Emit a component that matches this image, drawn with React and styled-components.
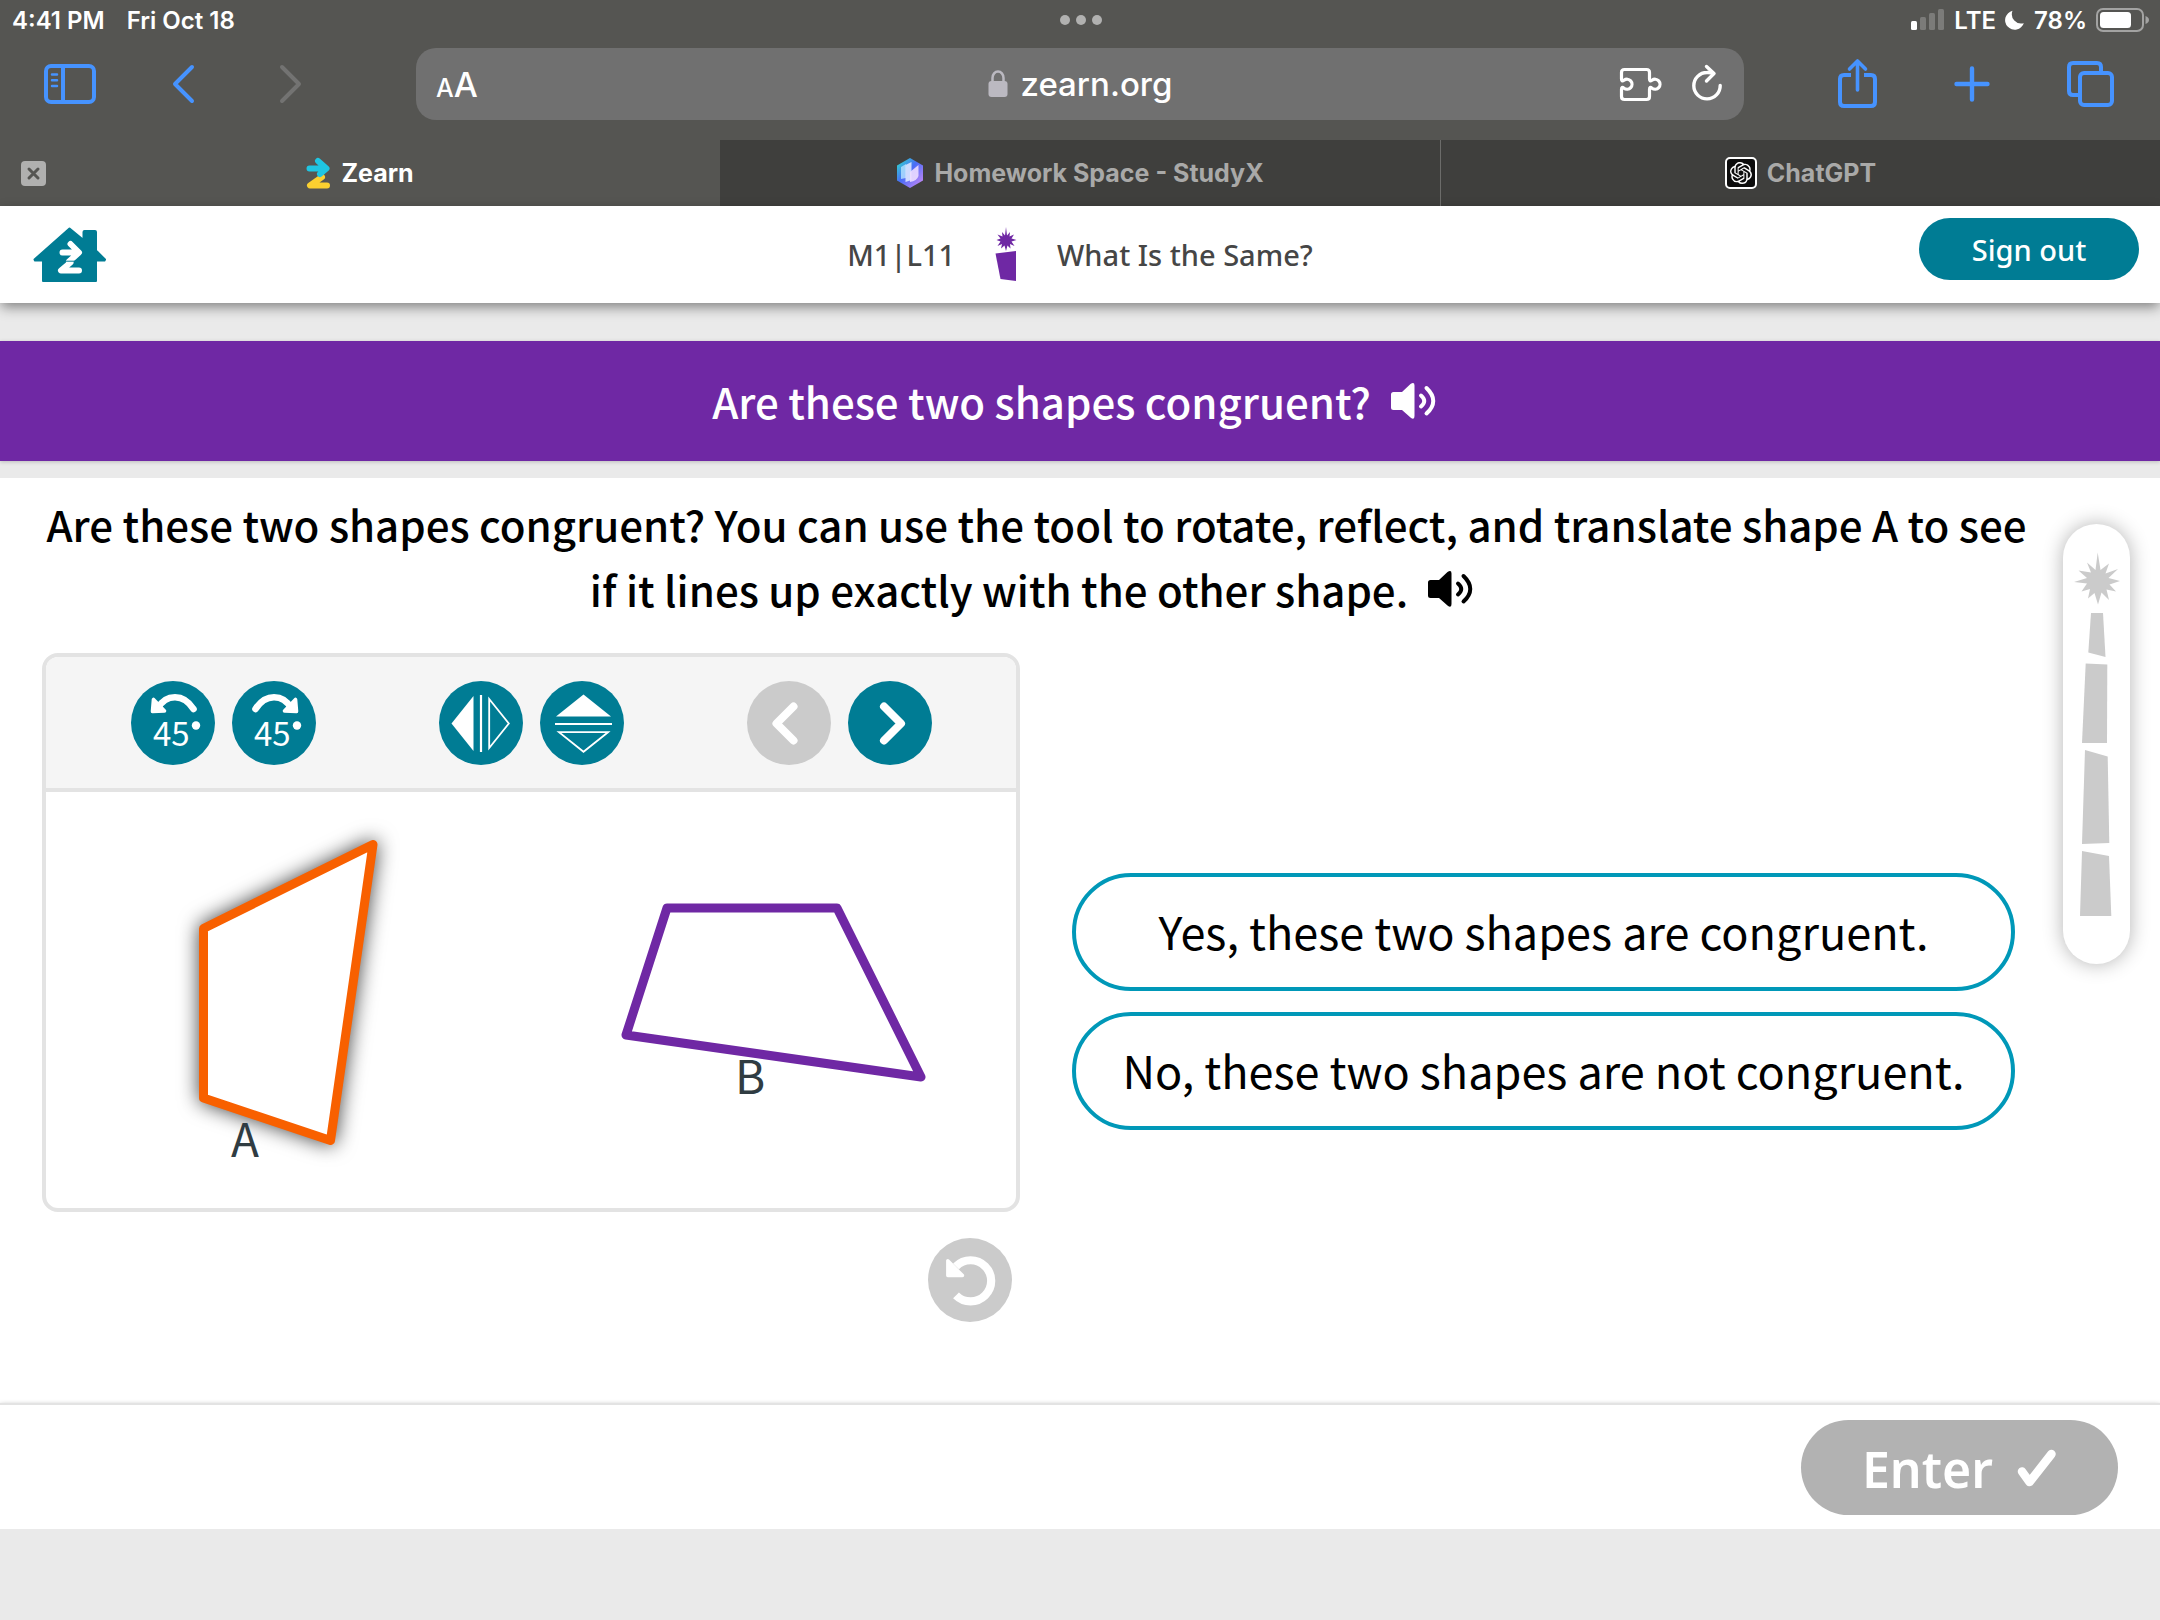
import React from 'react';
import styled, { createGlobalStyle } from 'styled-components';
import { SiOpenai } from 'react-icons/si';

const LESSON_FONT = "'Noto Sans CJK SC', 'Noto Sans', sans-serif";
const HEADER_FONT = "'Noto Sans', 'Open Sans', sans-serif";
const SYSTEM_FONT = "Inter, 'Liberation Sans', sans-serif";

const TEAL = '#007c94';
const PURPLE = '#6f28a4';

const GlobalStyle = createGlobalStyle`
  * {
    box-sizing: border-box;
  }

  body {
    margin: 0;
    background: #eaeaea;
  }

  svg {
    display: block;
    flex: none;
  }

  button {
    border: 0;
    padding: 0;
    background: none;
    color: inherit;
    font: inherit;
  }
`;

const SidebarIcon = () => (
  <svg width="52" height="40" viewBox="0 0 52 40" fill="none" stroke="currentColor" strokeWidth="4" strokeLinecap="round">
    <rect x="2" y="2" width="48" height="36" rx="5" />
    <path d="M19 3V37" />
    <path d="M8 10.5H13M8 16.3H13M8 22H13" strokeWidth="2.5" />
  </svg>
);

const BackIcon = () => (
  <svg width="24" height="40" viewBox="0 0 24 40" fill="none" stroke="currentColor" strokeWidth="4" strokeLinecap="round" strokeLinejoin="round">
    <path d="M20 3L3 20L20 37" />
  </svg>
);

const ForwardIcon = () => (
  <svg width="24" height="40" viewBox="0 0 24 40" fill="none" stroke="currentColor" strokeWidth="4" strokeLinecap="round" strokeLinejoin="round">
    <path d="M3 3L20 20L3 37" />
  </svg>
);

const LockIcon = () => (
  <svg width="20" height="28" viewBox="0 0 20 28" fill="#bbb9c1">
    <rect x="0.5" y="11" width="19" height="16" rx="3" />
    <path d="M4.5 12V8a5.5 6.5 0 0 1 11 0V12" fill="none" stroke="#bbb9c1" strokeWidth="2.5" />
  </svg>
);

const PuzzleIcon = () => (
  <svg width="44" height="37" viewBox="0 0 44 37" fill="none" stroke="currentColor" strokeWidth="3.2" strokeLinejoin="round">
    <path d="M6.5 3.5H28.5Q31.5 3.5 31.5 6.5V13Q31.5 16 34 14.2A5 5 0 1 1 34 22.2Q31.5 20.2 31.5 23.5V30.5Q31.5 33.5 28.5 33.5H6.5Q3.5 33.5 3.5 30.5V23.5Q3.5 20.2 6 22.2A5 5 0 1 0 6 14.2Q3.5 16 3.5 13V6.5Q3.5 3.5 6.5 3.5Z" />
  </svg>
);

const ReloadIcon = () => (
  <svg width="34" height="40" viewBox="0 0 34 40" fill="none" stroke="currentColor" strokeWidth="3.4" strokeLinecap="round" strokeLinejoin="round">
    <path d="M30.2 21.5A13.2 13.2 0 1 1 17 8.5Q20.5 8.3 23.5 9.5" />
    <path d="M16.5 2.5L24 9.5L16.5 17" />
  </svg>
);

const ShareIcon = () => (
  <svg width="40" height="52" viewBox="0 0 40 52" fill="none" stroke="currentColor" strokeWidth="4" strokeLinecap="round" strokeLinejoin="round">
    <path d="M14 17H7Q3 17 3 21V44Q3 48 7 48H34Q38 48 38 44V21Q38 17 34 17H27" strokeLinecap="butt" />
    <path d="M20.5 3V32M12.5 11L20.5 3L28.5 11" strokeWidth="3.6" />
  </svg>
);

const PlusIcon = () => (
  <svg width="36" height="36" viewBox="0 0 36 36" stroke="currentColor" strokeWidth="4.4" strokeLinecap="round">
    <path d="M18 2.5V33.5M2.5 18H33.5" />
  </svg>
);

const TabsIcon = () => (
  <svg width="48" height="48" viewBox="0 0 48 48" fill="none" stroke="currentColor" strokeWidth="4">
    <rect x="13" y="13" width="32" height="32" rx="4" />
    <path d="M34 11V7Q34 3 30 3H6Q2 3 2 7V31Q2 35 6 35H11" />
  </svg>
);

const SignalIcon = () => (
  <svg width="34" height="22" viewBox="0 0 34 22" fill="#7b7b79">
    <rect x="0" y="12" width="6" height="9" rx="1.5" fill="#fff" />
    <rect x="9" y="8" width="6" height="13" rx="1.5" />
    <rect x="18" y="4" width="6" height="17" rx="1.5" />
    <rect x="27" y="0" width="6" height="21" rx="1.5" />
  </svg>
);

const MoonIcon = () => (
  <svg width="20" height="20" viewBox="0 0 20 20" fill="#fff">
    <path d="M7.5 0.8A9.6 9.6 0 1 0 18.8 13.2A9.4 9.4 0 0 1 7.5 0.8Z" />
  </svg>
);

const BatteryIcon = () => (
  <svg width="54" height="24" viewBox="0 0 54 24">
    <rect x="1" y="1" width="46" height="22" rx="6" fill="none" stroke="#a3a3a2" strokeWidth="2" />
    <rect x="4" y="4" width="31" height="16" rx="3.5" fill="#fff" />
    <path d="M49.5 8Q53 9.5 53 12T49.5 16Z" fill="#a3a3a2" />
  </svg>
);

const CloseIcon = () => (
  <svg width="25" height="25" viewBox="0 0 25 25">
    <rect width="25" height="25" rx="4" fill="#b0b0af" />
    <path d="M8 8L17 17M17 8L8 17" stroke="#555552" strokeWidth="3" strokeLinecap="round" />
  </svg>
);

const ZearnIcon = () => (
  <svg width="25" height="32" viewBox="0 0 25 32" fill="none" strokeWidth="6" strokeLinecap="round" strokeLinejoin="round">
    <path d="M16 20L4 28.5H21" stroke="#fbd030" />
    <path d="M12 4L20.5 11.5L14 17M3.5 11.5H18" stroke="#1fc6e3" />
  </svg>
);

const StudyIcon = () => (
  <svg width="28" height="30" viewBox="0 0 28 30">
    <defs>
      <linearGradient id="hex" x1="0" y1="0" x2="1" y2="1">
        <stop offset="0" stopColor="#2be8c8" />
        <stop offset="0.45" stopColor="#4a6cf7" />
        <stop offset="1" stopColor="#d78cf5" />
      </linearGradient>
    </defs>
    <path d="M14 0L27 7.5V22.5L14 30L1 22.5V7.5Z" fill="url(#hex)" />
    <path d="M5 9L10 6V20L5 21Z" fill="#b7e4ff" opacity="0.8" />
    <path d="M9.5 7L15.5 4V22L9.5 24Z" fill="#dbe6ff" opacity="0.9" />
    <path d="M14 14L22.5 7V18Q21 23 14 24Z" fill="#ecdcff" opacity="0.9" />
  </svg>
);

const HomeIcon = () => (
  <svg width="74" height="56" viewBox="0 0 74 56" strokeLinejoin="round" strokeLinecap="round">
    <path
      d="M36.5 1.5L50.5 13V5Q50.5 4 51.5 4H62Q63 4 63 5V23.5L72 32.5L71.5 33.5H63V54H10V33.5H2L1.5 32.5Z"
      fill={TEAL}
      stroke={TEAL}
      strokeWidth="2"
    />
    <path d="M37.5 35.5L28 43.5H46" fill="none" stroke="#fff" strokeWidth="6" />
    <path d="M37.5 17L46 25.5L36 34.5M29.5 25.5H44" fill="none" stroke="#fff" strokeWidth="6" />
    <path d="M30 34.2H44" stroke={TEAL} strokeWidth="1" />
  </svg>
);

const LessonIcon = () => (
  <svg width="22" height="56" viewBox="0 0 22 56" fill={PURPLE}>
    <path d="M11 0L12 8.5L15 5L14.5 9.5L19 7.5L16.5 11.5L21.5 13L16.5 14.5L19.5 19L15 17L15.5 21.5L12.5 18.5L11 24L9.5 18.5L6 21.5L7 17L2.5 19L5.5 14.5L1.5 13L5.5 11.5L2.5 7.5L7.5 9.5L7 5L10 8.5Z" />
    <path d="M0.5 26.5L21 24V54L5.5 52Z" />
  </svg>
);

const SpeakerIcon = () => (
  <svg width="45" height="36" viewBox="0 0 45 36" fill="currentColor">
    <path d="M2.5 9H11L19.5 1Q23.5 -1.5 23.5 2.5V33Q23.5 37.5 19.5 34.5L11 27H2.5Q0 27 0 24.5V11.5Q0 9 2.5 9Z" />
    <path d="M30 12.5Q36.5 18 30 23.5M35.5 5Q49 18 35.5 30.5" fill="none" stroke="currentColor" strokeWidth="4" strokeLinecap="round" />
  </svg>
);

const RotateIcon = ({ clockwise }) => (
  <svg width="84" height="84" viewBox="0 0 84 84" fill="#fff">
    <g transform={clockwise ? 'translate(86 0) scale(-1 1)' : undefined}>
      <path d="M62.5 28Q55 16.2 44 16.2T27 27" fill="none" stroke="#fff" strokeWidth="6.6" strokeLinecap="round" />
      <path d="M22.5 18.5L21.5 30.5L33.5 30Z" stroke="#fff" strokeWidth="3.6" strokeLinejoin="round" />
    </g>
    <text x="22" y="65" fontFamily={LESSON_FONT} fontSize="33">45</text>
    <circle cx="65" cy="44.5" r="4.2" />
  </svg>
);

const ReflectIcon = ({ vertical }) => (
  <svg width="84" height="84" viewBox="0 0 84 84" fill="none" stroke="#fff" strokeWidth="1.8">
    <g transform={vertical ? 'rotate(90 42.5 42.5) translate(1 -1)' : undefined}>
      <path d="M12.5 42.5L34.5 15V70Z" fill="#fff" stroke="none" />
      <path d="M42 14V71" strokeWidth="2.2" />
      <path d="M50.2 18L69.8 42.5L50.2 67Z" />
    </g>
  </svg>
);

const ChevronIcon = ({ forward }) => (
  <svg width="84" height="84" viewBox="0 0 84 84" fill="none" stroke="#fff" strokeWidth="8" strokeLinecap="round" strokeLinejoin="round">
    <path d={forward ? 'M36 25.5L53 42.5L36 59.5' : 'M46.5 25.5L29.5 42.5L46.5 59.5'} />
  </svg>
);

const ResetIcon = () => (
  <svg width="84" height="84" viewBox="0 0 84 84" fill="none" stroke="#fff">
    <path d="M28 28.3A20.6 20.6 0 1 1 28 57.4" strokeWidth="8.2" />
    <path d="M19.8 22.8V37.5H34.5Z" fill="#fff" strokeWidth="3.4" strokeLinejoin="round" />
  </svg>
);

const CheckIcon = () => (
  <svg width="40" height="40" viewBox="0 0 40 40" fill="none" stroke="currentColor" strokeWidth="8.5" strokeLinecap="round" strokeLinejoin="round">
    <path d="M5 22.5L12.5 33L34.5 5" />
  </svg>
);

const TowerIcon = () => (
  <svg width="67" height="440" viewBox="0 0 67 440" fill="#cbcbcb">
    <path d="M34.7 28.5L37.5 46L46 39.5L42.5 49.5L55 45L45.5 54L57 57L46.5 60.5L53 67.5L43.5 65.5L46 76L38.5 68.5L35 80.5L31.5 69L25 74.5L27 65L18.5 67.5L24 59.5L11 58L24 54L15.5 46.5L28 48.5L24 38.5L32.5 46Z" />
    <path d="M28 89H40L42.5 133L25.3 128.5Z" />
    <path d="M22.7 139.5L44.3 140.5L44 219H19Z" />
    <path d="M22 226L44.7 232.5L46.3 319L19 320Z" />
    <path d="M19 327L46 332L48.3 392H17Z" />
  </svg>
);

const Tool = ({ label, disabled, children }) => (
  <RoundButton type="button" aria-label={label} disabled={disabled}>
    {children}
  </RoundButton>
);

const Workspace = () => (
  <Canvas viewBox="0 0 970 416" role="img" aria-label="Shape A and shape B">
    <ShapeA points="157.5,136.5 327,52.5 284.5,348.5 157.5,306" />
    <ShapeB points="621,116 791,116 875,285 580,243" />
    <ShapeLabel x="185" y="365">A</ShapeLabel>
    <ShapeLabel x="689" y="302">B</ShapeLabel>
  </Canvas>
);

const App = () => (
  <>
    <GlobalStyle />
    <Browser>
      <StatusBar>
        <StatusGroup>
          <span>4:41 PM</span>
          <span>Fri Oct 18</span>
        </StatusGroup>
        <Dots>
          <i />
          <i />
          <i />
        </Dots>
        <StatusGroup right>
          <SignalIcon />
          <span>LTE</span>
          <MoonIcon />
          <span>78%</span>
          <BatteryIcon />
        </StatusGroup>
      </StatusBar>
      <Toolbar>
        <NavGroup>
          <ToolbarButton aria-label="Sidebar"><SidebarIcon /></ToolbarButton>
          <ToolbarButton aria-label="Back"><BackIcon /></ToolbarButton>
          <ToolbarButton aria-label="Forward" disabled><ForwardIcon /></ToolbarButton>
        </NavGroup>
        <AddressBar>
          <TextSize type="button" aria-label="Page settings"><small>A</small>A</TextSize>
          <Address>
            <LockIcon />
            <AddressInput aria-label="Address" defaultValue="zearn.org" />
          </Address>
          <AddressActions>
            <button type="button" aria-label="Extensions"><PuzzleIcon /></button>
            <button type="button" aria-label="Reload"><ReloadIcon /></button>
          </AddressActions>
        </AddressBar>
        <ActionGroup>
          <ToolbarButton aria-label="Share"><ShareIcon /></ToolbarButton>
          <ToolbarButton aria-label="New tab"><PlusIcon /></ToolbarButton>
          <ToolbarButton aria-label="Tabs"><TabsIcon /></ToolbarButton>
        </ActionGroup>
      </Toolbar>
      <TabBar>
        <Tab active>
          <CloseButton type="button" aria-label="Close tab"><CloseIcon /></CloseButton>
          <TabTitle type="button"><ZearnIcon />Zearn</TabTitle>
        </Tab>
        <Tab>
          <TabTitle type="button"><StudyIcon />Homework Space - StudyX</TabTitle>
        </Tab>
        <Tab>
          <TabTitle type="button">
            <ChatBadge><SiOpenai size={22} /></ChatBadge>
            ChatGPT
          </TabTitle>
        </Tab>
      </TabBar>
    </Browser>
    <Header>
      <HomeLink href="#" aria-label="Home"><HomeIcon /></HomeLink>
      <Lesson>
        <span>M1|L11</span>
        <LessonIcon />
        <span>What Is the Same?</span>
      </Lesson>
      <SignOut type="button">Sign out</SignOut>
    </Header>
    <Banner>
      <h1>Are these two shapes congruent?</h1>
      <BannerSpeaker type="button" aria-label="Read title aloud"><SpeakerIcon /></BannerSpeaker>
    </Banner>
    <Main>
      <Content>
        <Prompt>
          Are these two shapes congruent? You can use the tool to rotate, reflect, and translate
          shape A to see if it lines up exactly with the other shape.
          <InlineSpeaker type="button" aria-label="Read question aloud"><SpeakerIcon /></InlineSpeaker>
        </Prompt>
        <Work>
          <div>
            <Panel>
              <PanelTools>
                <ToolPair>
                  <Tool label="Rotate 45 degrees left"><RotateIcon /></Tool>
                  <Tool label="Rotate 45 degrees right"><RotateIcon clockwise /></Tool>
                </ToolPair>
                <ToolPair>
                  <Tool label="Reflect left to right"><ReflectIcon /></Tool>
                  <Tool label="Reflect top to bottom"><ReflectIcon vertical /></Tool>
                </ToolPair>
                <ToolPair>
                  <Tool label="Undo" disabled><ChevronIcon /></Tool>
                  <Tool label="Redo"><ChevronIcon forward /></Tool>
                </ToolPair>
              </PanelTools>
              <Workspace />
            </Panel>
            <ResetRow>
              <Tool label="Reset" disabled><ResetIcon /></Tool>
            </ResetRow>
          </div>
          <Answers>
            <Answer type="button">Yes, these two shapes are congruent.</Answer>
            <Answer type="button">No, these two shapes are not congruent.</Answer>
          </Answers>
        </Work>
      </Content>
      <Progress><TowerIcon /></Progress>
    </Main>
    <Footer>
      <Enter type="button">Enter<CheckIcon /></Enter>
    </Footer>
  </>
);

const Browser = styled.div`
  background: #555552;
  color: #fff;
  font-family: ${SYSTEM_FONT};
`;

const StatusBar = styled.div`
  display: grid;
  grid-template-columns: 1fr auto 1fr;
  align-items: center;
  height: 40px;
  padding: 0 10px 0 12px;
  font-size: 24px;
  font-weight: 600;
`;

const StatusGroup = styled.div`
  display: flex;
  align-items: center;
  justify-content: ${({ right }) => (right ? 'flex-end' : 'flex-start')};
  gap: ${({ right }) => (right ? 9 : 22)}px;
`;

const Dots = styled.div`
  display: flex;
  gap: 6px;

  i {
    width: 10px;
    height: 10px;
    border-radius: 50%;
    background: #b1b1b0;
  }
`;

const Toolbar = styled.div`
  display: flex;
  align-items: center;
  height: 100px;
  padding: 8px 45px 20px 44px;
`;

const NavGroup = styled.div`
  display: flex;
  align-items: center;
  gap: 76px;
  margin-right: 106px;
`;

const ActionGroup = styled.div`
  display: flex;
  align-items: center;
  gap: 77px;
  margin-left: 93px;
`;

const ToolbarButton = styled.button.attrs({ type: 'button' })`
  display: flex;
  min-width: 31px;
  color: ${({ disabled }) => (disabled ? '#737372' : '#4693ff')};
`;

const AddressBar = styled.div`
  display: grid;
  flex: 1;
  grid-template-columns: 1fr auto 1fr;
  align-items: center;
  height: 72px;
  padding: 0 20px;
  border-radius: 20px;
  background: #707070;
`;

const TextSize = styled.button`
  justify-self: start;
  font-size: 34px;
  font-weight: 500;

  small {
    font-size: 25px;
  }
`;

const Address = styled.label`
  display: flex;
  align-items: center;
  gap: 13px;
`;

const AddressInput = styled.input`
  width: 152px;
  padding: 0;
  border: 0;
  background: none;
  color: #fff;
  font: 500 33px ${SYSTEM_FONT};
`;

const AddressActions = styled.div`
  display: flex;
  align-items: center;
  justify-content: flex-end;
  gap: 28px;
`;

const TabBar = styled.div`
  display: grid;
  grid-template-columns: repeat(3, 1fr);
  height: 66px;
`;

const Tab = styled.div`
  display: grid;
  grid-template-columns: 1fr auto 1fr;
  align-items: center;
  padding: 0 21px;
  background: ${({ active }) => (active ? 'none' : '#3f3f3d')};
  color: ${({ active }) => (active ? '#fff' : '#a9a9a8')};

  & + & + & {
    border-left: 1px solid #6c6c6a;
  }
`;

const CloseButton = styled.button`
  justify-self: start;
`;

const TabTitle = styled.button`
  display: flex;
  grid-column: 2;
  align-items: center;
  gap: 10px;
  font-size: 25px;
  font-weight: 700;
`;

const ChatBadge = styled.span`
  display: flex;
  align-items: center;
  justify-content: center;
  width: 32px;
  height: 32px;
  border: 2px solid #fff;
  border-radius: 5px;
  background: #0d0d0d;
  color: #fff;
`;

const Header = styled.header`
  position: relative;
  display: grid;
  grid-template-columns: 1fr auto 1fr;
  align-items: center;
  height: 97px;
  padding: 0 21px;
  background: #fff;
  box-shadow: 0 5px 12px -1px rgba(0, 0, 0, 0.45);
  color: #464646;
  font-family: ${HEADER_FONT};
  font-size: 29px;
  font-weight: 500;
`;

const HomeLink = styled.a`
  justify-self: start;
  padding-left: 12px;
`;

const Lesson = styled.div`
  display: flex;
  align-items: center;
  gap: 40px;
`;

const SignOut = styled.button`
  align-self: start;
  justify-self: end;
  width: 220px;
  height: 62px;
  margin-top: 12px;
  border-radius: 31px;
  background: ${TEAL};
  color: #fff;
`;

const Banner = styled.section`
  display: flex;
  align-items: center;
  justify-content: center;
  gap: 20px;
  height: 120px;
  margin: 38px 0 17px;
  background: ${PURPLE};
  box-shadow: 0 1px 4px rgba(0, 0, 0, 0.2);
  color: #fff;
  font-family: ${LESSON_FONT};

  h1 {
    margin: 0;
    font-size: 42px;
    font-weight: 500;
    line-height: 60px;
  }
`;

const BannerSpeaker = styled.button`
  margin-right: 12px;
`;

const Main = styled.main`
  display: flex;
  align-items: flex-start;
  gap: 32px;
  padding: 13px 30px 53px 42px;
  background: #fff;
`;

const Content = styled.div`
  flex: 1;
`;

const Prompt = styled.p`
  margin: 0 0 32px;
  color: #000;
  font-family: ${LESSON_FONT};
  font-size: 42px;
  font-weight: 500;
  line-height: 65px;
  text-align: center;
`;

const InlineSpeaker = styled.button`
  display: inline-block;
  margin: 0 10px 0 20px;
`;

const Work = styled.div`
  display: grid;
  grid-template-columns: 978fr 943fr;
  gap: 52px;
  padding-right: 16px;
`;

const Panel = styled.section`
  overflow: hidden;
  border: 4px solid #e3e3e3;
  border-radius: 16px;
`;

const PanelTools = styled.div`
  display: flex;
  justify-content: center;
  gap: 123px;
  padding: 24px 0 23px;
  border-bottom: 4px solid #e3e3e3;
  background: #f5f5f5;
`;

const ToolPair = styled.div`
  display: flex;
  gap: 17px;
`;

const RoundButton = styled.button`
  width: 84px;
  height: 84px;
  border-radius: 50%;
  background: ${({ disabled }) => (disabled ? '#cbcbcb' : TEAL)};
`;

const Canvas = styled.svg`
  width: 100%;
`;

const ShapeA = styled.polygon`
  fill: #fff;
  stroke: #f86000;
  stroke-width: 9px;
  stroke-linejoin: round;
  filter: drop-shadow(0 0 10px rgba(0, 0, 0, 0.75));
`;

const ShapeB = styled.polygon`
  fill: none;
  stroke: ${PURPLE};
  stroke-width: 9px;
  stroke-linejoin: round;
`;

const ShapeLabel = styled.text`
  fill: #303c42;
  font-family: ${LESSON_FONT};
  font-size: 46px;
`;

const ResetRow = styled.div`
  display: flex;
  justify-content: flex-end;
  padding: 26px 8px 28px;
`;

const Answers = styled.div`
  display: flex;
  flex-direction: column;
  justify-content: center;
  gap: 21px;
`;

const Answer = styled.button`
  height: 118px;
  padding-bottom: 3px;
  border: 4px solid #0098b8;
  border-radius: 59px;
  background: #fff;
  color: #000;
  font-family: ${LESSON_FONT};
  font-size: 45px;
`;

const Progress = styled.aside`
  margin-top: 33px;
  border-radius: 34px;
  background: #fff;
  box-shadow: 0 0 20px rgba(0, 0, 0, 0.3);
`;

const Footer = styled.footer`
  display: flex;
  justify-content: flex-end;
  padding: 15px 42px 14px;
  border-top: 2px solid #e3e3e3;
  background: #fff;
  box-shadow: 0 2px 5px rgba(0, 0, 0, 0.4);
`;

const Enter = styled.button`
  display: flex;
  align-items: center;
  justify-content: center;
  gap: 24px;
  width: 317px;
  height: 95px;
  padding-top: 2px;
  border-radius: 48px;
  background: #b2b2b2;
  color: #fff;
  font-family: ${HEADER_FONT};
  font-size: 50px;
  font-weight: 600;
`;

export default App;
